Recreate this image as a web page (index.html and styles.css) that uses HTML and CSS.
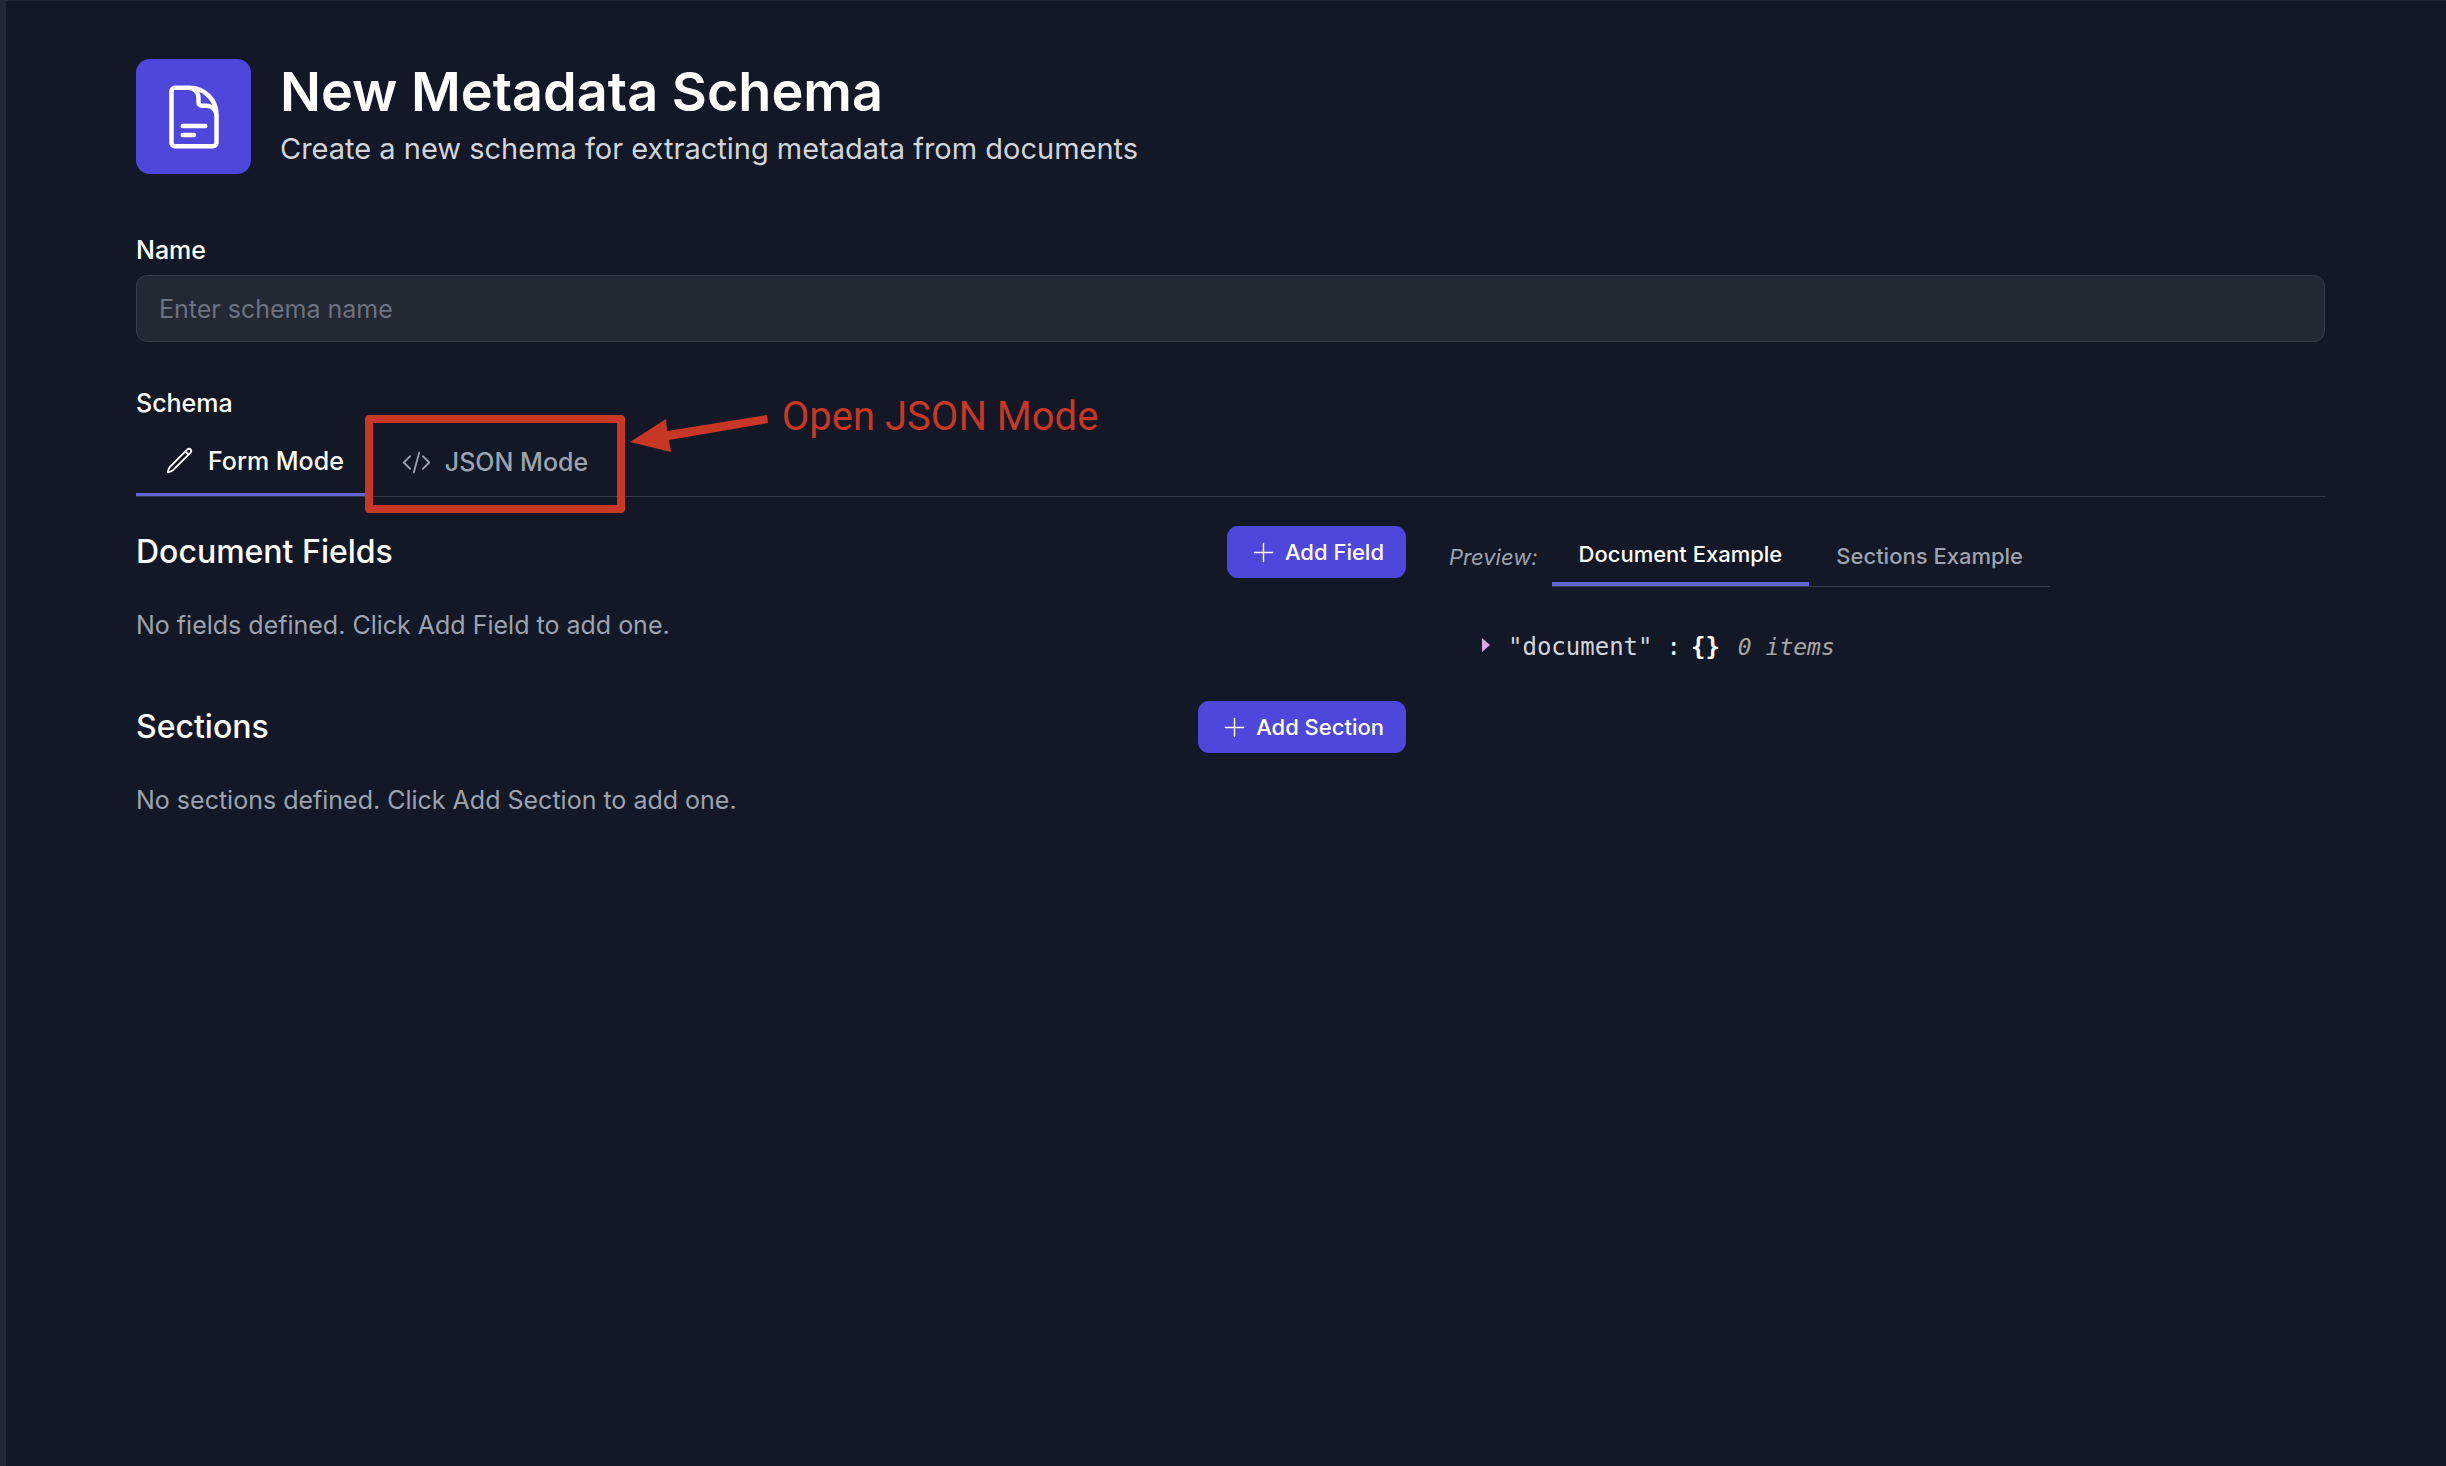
FILE: index.html
```html
<!DOCTYPE html>
<html lang="en">
<head>
<meta charset="utf-8">
<title>New Metadata Schema</title>
<link rel="stylesheet" href="styles.css">
</head>
<body>
<main class="page">
  <header class="page-header">
    <span class="page-icon">
      <svg viewBox="0 0 24 24" aria-hidden="true"><path d="M19.5 14.25v-2.625a3.375 3.375 0 0 0-3.375-3.375h-1.5A1.125 1.125 0 0 1 13.5 7.125v-1.5a3.375 3.375 0 0 0-3.375-3.375H8.25m0 12.75h7.5m-7.5 3H12M10.5 2.25H5.625c-.621 0-1.125.504-1.125 1.125v17.25c0 .621.504 1.125 1.125 1.125h12.75c.621 0 1.125-.504 1.125-1.125V11.25a9 9 0 0 0-9-9Z"/></svg>
    </span>
    <div>
      <h1 class="page-title">New Metadata Schema</h1>
      <p class="page-subtitle">Create a new schema for extracting metadata from documents</p>
    </div>
  </header>

  <form class="schema-form">
    <div class="field">
      <label class="label" for="schema-name">Name</label>
      <input class="text-input" id="schema-name" type="text" placeholder="Enter schema name">
    </div>

    <section class="schema">
      <h2 class="label">Schema</h2>
      <div class="tabs" role="tablist" aria-label="Schema mode">
        <button class="tab tab-active" type="button" role="tab" aria-selected="true">
          <svg class="tab-icon" viewBox="0 0 24 24" aria-hidden="true"><path d="m16.862 4.487 1.687-1.688a1.875 1.875 0 1 1 2.652 2.652L6.832 19.82a4.5 4.5 0 0 1-1.897 1.13l-2.685.8.8-2.685a4.5 4.5 0 0 1 1.13-1.897L16.863 4.487Zm0 0L19.5 7.125"/></svg>
          Form Mode
        </button>
        <div class="tab-marked">
          <button class="tab" type="button" role="tab" aria-selected="false">
            <svg class="tab-icon" viewBox="0 0 24 24" aria-hidden="true"><path d="M17.25 6.75 22.5 12l-5.25 5.25m-10.5 0L1.5 12l5.25-5.25m7.5-3-4.5 16.5"/></svg>
            JSON Mode
          </button>
          <div class="callout">
            <span class="callout-box"></span>
            <svg class="callout-arrow" viewBox="0 0 138 34" aria-hidden="true"><path d="M0 23 36 0l1 12 100-16 1 8-99 17 2 12Z"/></svg>
            <span class="callout-text">Open JSON Mode</span>
          </div>
        </div>
      </div>

      <div class="editor">
        <div class="editor-form">
          <section class="group">
            <div class="group-header">
              <h3 class="group-title">Document Fields</h3>
              <button class="button" type="button">
                <svg class="button-icon" viewBox="0 0 24 24" aria-hidden="true"><path d="M12 4.5v15m7.5-7.5h-15"/></svg>
                Add Field
              </button>
            </div>
            <p class="empty">No fields defined. Click Add Field to add one.</p>
          </section>
          <section class="group">
            <div class="group-header">
              <h3 class="group-title">Sections</h3>
              <button class="button" type="button">
                <svg class="button-icon" viewBox="0 0 24 24" aria-hidden="true"><path d="M12 4.5v15m7.5-7.5h-15"/></svg>
                Add Section
              </button>
            </div>
            <p class="empty">No sections defined. Click Add Section to add one.</p>
          </section>
        </div>

        <aside class="preview">
          <div class="preview-bar">
            <span class="preview-label">Preview:</span>
            <div class="preview-tabs" role="tablist" aria-label="Preview">
              <button class="preview-tab preview-tab-active" type="button" role="tab" aria-selected="true">Document Example</button>
              <button class="preview-tab" type="button" role="tab" aria-selected="false">Sections Example</button>
            </div>
          </div>
          <div class="json">
            <svg class="json-caret" viewBox="0 0 8 14" aria-hidden="true"><path d="M0 0 8 7 0 14Z"/></svg>
            <span class="json-key">"document"</span>
            <span class="json-colon">:</span>
            <span class="json-brace">{}</span>
            <span class="json-count">0 items</span>
          </div>
        </aside>
      </div>
    </section>
  </form>
</main>
</body>
</html>
```
FILE: styles.css
```css
* {
  box-sizing: border-box;
}

body {
  margin: 0;
  min-height: 100vh;
  background: #121826;
  border-top: 1px solid #222834;
  border-left: 6px solid #222834;
  color: #fff;
  font-family: Inter, "Liberation Sans", sans-serif;
  font-size: 25px;
  line-height: 36px;
}

h1, h2, h3, p {
  margin: 0;
}

button, input {
  font: inherit;
}

button {
  border: 0;
  background: none;
  cursor: pointer;
}

svg {
  flex: none;
  fill: none;
  stroke: currentColor;
  stroke-width: 1.5;
  stroke-linecap: round;
  stroke-linejoin: round;
}

.page {
  padding: 58px 121px 58px 130px;
}

.page-header {
  display: flex;
  align-items: center;
  gap: 29px;
}

.page-icon {
  display: grid;
  place-items: center;
  width: 115px;
  height: 115px;
  border-radius: 14px;
  background: #4f46dc;
}

.page-icon svg {
  width: 72px;
  height: 72px;
}

.page-title {
  font-size: 54px;
  font-weight: 600;
  line-height: 65px;
}

.page-subtitle {
  color: #d1d5db;
  font-size: 29px;
  line-height: 50px;
}

.schema-form {
  display: grid;
  gap: 43px;
  margin-top: 58px;
}

.label {
  display: block;
  font-size: 25px;
  font-weight: 500;
  line-height: 36px;
}

.text-input {
  display: block;
  width: 100%;
  height: 67px;
  margin-top: 7px;
  padding: 0 22px;
  border: 1px solid #363c49;
  border-radius: 11px;
  background: #222834;
  color: #fff;
}

.text-input::placeholder {
  color: #6b7280;
  opacity: 1;
}

.tabs {
  display: flex;
  margin-top: 7px;
  border-bottom: 1px solid #373d49;
}

.tab {
  display: flex;
  align-items: center;
  gap: 14px;
  height: 68px;
  padding: 0 29px;
  color: #9ca3af;
  font-weight: 500;
}

.tab-active {
  border-bottom: 3px solid #6366d8;
  color: #fff;
}

.tab-icon {
  width: 29px;
  height: 29px;
}

.tab-marked {
  position: relative;
}

/* Annotation drawn over the JSON tab */
.callout {
  position: absolute;
  top: -13px;
  left: -8px;
  color: #c83626;
  pointer-events: none;
}

.callout-box {
  position: absolute;
  width: 260px;
  height: 98px;
  border: 8px solid currentColor;
  border-radius: 4px;
}

.callout-arrow {
  position: absolute;
  top: 4px;
  left: 265px;
  width: 138px;
  height: 34px;
  overflow: visible;
  fill: currentColor;
  stroke: none;
}

.callout-text {
  position: absolute;
  top: -20px;
  left: 417px;
  font-family: Roboto, "Liberation Sans", sans-serif;
  font-size: 40px;
  line-height: 44px;
  white-space: nowrap;
}

.editor {
  display: grid;
  grid-template-columns: 1270fr 876fr;
  gap: 43px;
  margin-top: 29px;
}

.editor-form {
  display: grid;
  align-content: start;
  gap: 58px;
}

.group-header {
  display: flex;
  align-items: center;
  justify-content: space-between;
}

.group-title {
  font-size: 32px;
  font-weight: 500;
  line-height: 50px;
}

.button {
  display: flex;
  align-items: center;
  gap: 7px;
  height: 52px;
  padding: 0 22px;
  border-radius: 11px;
  background: #4f46dc;
  color: #fff;
  font-size: 22px;
  font-weight: 500;
}

.button-icon {
  width: 29px;
  height: 29px;
  stroke-width: 1.2;
}

.empty {
  margin-top: 29px;
  color: #9ca3af;
}

.preview-bar {
  display: flex;
  align-items: center;
  gap: 14px;
  color: #9ca3af;
  font-size: 22px;
}

.preview-label {
  font-style: italic;
}

.preview-tabs {
  display: flex;
  border-bottom: 1px solid #373d49;
}

.preview-tab {
  height: 60px;
  padding: 0 27px;
  color: #9ca3af;
  font-weight: 500;
}

.preview-tab-active {
  border-bottom: 4px solid #6366d8;
  color: #fff;
}

.json {
  display: flex;
  align-items: center;
  margin-top: 42px;
  padding-left: 33px;
  font-family: "DejaVu Sans Mono", monospace;
  font-size: 24px;
}

.json-caret {
  width: 8px;
  height: 14px;
  margin: 0 18px 4px 0;
  color: #d8a8e4;
  fill: currentColor;
  stroke: none;
}

.json-key {
  color: #d1d5db;
}

.json-colon {
  margin: 0 10px 0 14px;
}

.json-brace {
  font-weight: 700;
}

.json-count {
  margin-left: 18px;
  color: #a8a8a8;
  font-size: 23px;
  font-style: italic;
}
```
